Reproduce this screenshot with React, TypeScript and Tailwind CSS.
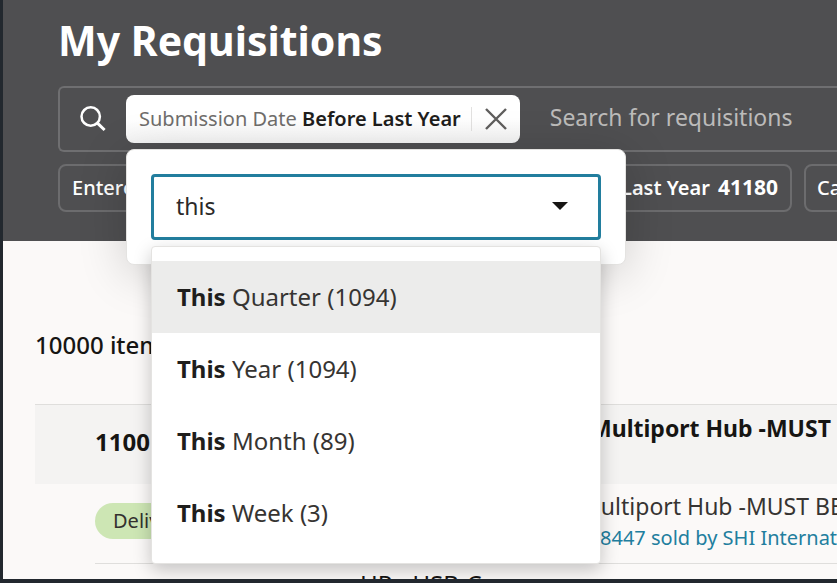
import { useState } from 'react';

const options = [
  { rest: 'Quarter', count: 1094 },
  { rest: 'Year', count: 1094 },
  { rest: 'Month', count: 89 },
  { rest: 'Week', count: 3 },
];

const SearchIcon = () => (
  <svg width="26" height="26" viewBox="0 0 26 26" fill="none" stroke="currentColor" strokeWidth="2.5" aria-hidden="true">
    <circle cx="10.7" cy="10.5" r="9.2" />
    <path d="M17.2 16.9L24.6 24" strokeWidth="3" />
  </svg>
);

const CloseIcon = () => (
  <svg width="22" height="22" viewBox="0 0 22 22" fill="none" stroke="currentColor" strokeWidth="2.4" aria-hidden="true">
    <path d="M1 1l20 20M21 1L1 21" />
  </svg>
);

const DatePopup = () => {
  const [value, setValue] = useState('this');
  const [active, setActive] = useState(0);

  return (
    <div className="absolute top-full left-0 z-10 mt-1.5 w-[500px] rounded-lg border border-[#e4e3e1] bg-white px-6 py-6 shadow-[0_8px_48px_rgba(0,0,0,0.18)]">
      <div className="relative flex h-[66px] items-center rounded border-[3px] border-[#227e9e] bg-white pr-[30px] pl-[22px]">
        <input
          aria-label="Submission Date"
          value={value}
          onChange={(e) => setValue(e.target.value)}
          className="min-w-0 flex-1 bg-transparent pb-0.5 text-[23px] text-[#2b2a29] outline-none"
        />
        <button type="button" aria-label="Show options" className="pb-0.5 text-[#161513]">
          <svg width="16" height="8" viewBox="0 0 16 8" fill="currentColor"><path d="M0 0h16L8 8z" /></svg>
        </button>
        <ul
          role="listbox"
          className="absolute top-full -right-[3px] -left-[3px] mt-[9px] rounded border border-[#e4e3e1] bg-white py-3.5 shadow-[0_6px_18px_rgba(0,0,0,0.22)]"
        >
          {options.map((option, i) => (
            <li
              key={option.rest}
              role="option"
              aria-selected={i === active}
              onMouseEnter={() => setActive(i)}
              className={`flex h-[72px] items-center px-[25px] text-2xl text-[#363432] ${i === active ? 'bg-[#ececeb]' : ''}`}
            >
              <span className="whitespace-pre"><b className="font-bold text-[#1f1e1c]">This</b> {option.rest} ({option.count})</span>
            </li>
          ))}
        </ul>
      </div>
    </div>
  );
};

export default function App() {
  return (
    <div className="h-screen overflow-hidden border-b-4 border-l-[3px] border-[#22282e] bg-[#fbf9f8] font-['Noto_Sans',sans-serif] whitespace-nowrap text-[#161513]">
      <header className="bg-[#4f4f51] pt-[15px] pb-[29px] pl-[55px] text-white">
        <h1 className="text-[41px] leading-[50px] font-bold">My Requisitions</h1>

        <div className="mt-[21px] flex h-[66px] items-center rounded-l-md border-y-2 border-l-2 border-[#6f6f71] pl-5">
          <SearchIcon />
          <div className="relative ml-5 flex h-12 shrink-0 items-center rounded-lg bg-linear-to-b from-white from-50% to-[#f4f4f4] pl-[13px] text-xl">
            <span className="whitespace-pre text-[#6f6d6b]">Submission Date <b className="font-semibold text-[#1f1e1c]">Before Last Year</b></span>
            <button type="button" aria-label="Remove filter" className="ml-2.5 flex h-6 items-center border-l border-[#e2e1e0] px-[13px] text-[#5f5e5d]">
              <CloseIcon />
            </button>
            <DatePopup />
          </div>
          <input
            aria-label="Search for requisitions"
            placeholder="Search for requisitions"
            className="ml-[30px] min-w-0 flex-1 bg-transparent pb-1 text-[23px] text-white outline-none placeholder:text-[#bcbbba]"
          />
        </div>

        <div className="mt-3 flex gap-3 overflow-hidden text-xl">
          <button type="button" className="h-12 w-[140px] shrink-0 rounded-lg border-2 border-[#6c6c6e] px-3 text-left font-medium">Entered By</button>
          <button type="button" className="flex h-12 w-[582px] shrink-0 items-center justify-end gap-2 rounded-lg border-2 border-[#6c6c6e] px-3 font-semibold">
            <span>Last Year</span>
            <span className="text-[21px] font-bold">41180</span>
          </button>
          <button type="button" className="h-12 shrink-0 rounded-lg border-2 border-[#6c6c6e] px-[11px] font-medium">Category</button>
        </div>
      </header>

      <main className="pt-[88px] pl-8">
        <p className="text-2xl font-medium">10000 items</p>

        <table className="mt-[43px] w-full table-fixed border-collapse text-left">
          <colgroup>
            <col className="w-[60px]" />
            <col className="w-[265px]" />
            <col />
          </colgroup>
          <tbody>
            <tr className="h-[79px] border-t border-[#dfdedc] bg-[#f4f3f2]">
              <td />
              <th className="pb-1 text-2xl font-bold">1100</th>
              <th className="pb-8 pl-[230px] text-[23px] font-bold">Multiport Hub -MUST</th>
            </tr>
            <tr className="h-20">
              <td />
              <td className="border-b border-[#dfdedc] pb-1">
                <span className="inline-flex h-9 items-center rounded-full bg-[#cde6b4] px-[18px] text-xl text-[#33312f]">Delivered</span>
              </td>
              <td className="border-b border-[#dfdedc] pb-0.5 pl-[220px]">
                <div className="text-[23px] leading-8 text-[#363432]">Multiport Hub -MUST BE</div>
                <a href="#supplier" className="block pl-5 text-xl leading-8 text-[#227e9e]">8447 sold by SHI International</a>
              </td>
            </tr>
            <tr>
              <td />
              <td />
              <td className="pt-1 text-2xl leading-8">HP - USB-C</td>
            </tr>
          </tbody>
        </table>
      </main>
    </div>
  );
}
